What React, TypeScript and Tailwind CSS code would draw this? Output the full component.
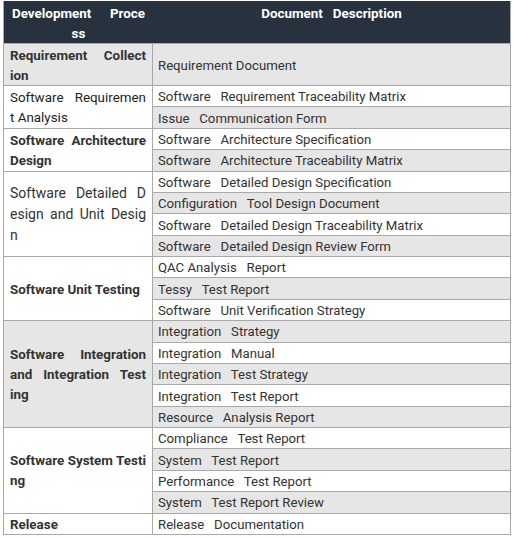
const groups = [
  {
    lines: ["Requirement Collect", "ion"],
    cls: "font-bold",
    bg: "bg-[#e6e6e6]",
    docs: ["Requirement Document"],
  },
  {
    lines: ["Software Requiremen", "t Analysis"],
    cls: "font-normal text-[#1e1e1e]",
    bg: "bg-white",
    docs: ["Software\u00a0\u00a0 Requirement Traceability Matrix", "Issue\u00a0\u00a0 Communication Form"],
  },
  {
    lines: ["Software Architecture", "Design"],
    cls: "font-bold",
    bg: "bg-white",
    docs: ["Software\u00a0\u00a0 Architecture Specification", "Software\u00a0\u00a0 Architecture Traceability Matrix"],
  },
  {
    lines: ["Software Detailed D", "esign and Unit Desig", "n"],
    cls: "font-normal text-[14px] leading-[21px]",
    bg: "bg-white",
    docs: [
      "Software\u00a0\u00a0 Detailed Design Specification",
      "Configuration\u00a0\u00a0 Tool Design Document",
      "Software\u00a0\u00a0 Detailed Design Traceability Matrix",
      "Software\u00a0\u00a0 Detailed Design Review Form",
    ],
  },
  {
    lines: ["Software Unit Testing"],
    cls: "font-bold",
    bg: "bg-white",
    docs: ["QAC Analysis\u00a0\u00a0 Report", "Tessy\u00a0\u00a0 Test Report", "Software\u00a0\u00a0 Unit Verification Strategy"],
  },
  {
    lines: ["Software Integration", "and Integration Test", "ing"],
    cls: "font-bold",
    bg: "bg-[#e6e6e6]",
    docs: [
      "Integration\u00a0\u00a0 Strategy",
      "Integration\u00a0\u00a0 Manual",
      "Integration\u00a0\u00a0 Test Strategy",
      "Integration\u00a0\u00a0 Test Report",
      "Resource\u00a0\u00a0 Analysis Report",
    ],
  },
  {
    lines: ["Software System Testi", "ng"],
    cls: "font-bold",
    bg: "bg-white",
    docs: ["Compliance\u00a0\u00a0 Test Report", "System\u00a0\u00a0 Test Report", "Performance\u00a0\u00a0 Test Report", "System\u00a0\u00a0 Test Report Review"],
  },
  {
    lines: ["Release"],
    cls: "font-bold",
    bg: "bg-white",
    docs: ["Release\u00a0\u00a0 Documentation"],
  },
];

function Justified({ lines }: { lines: string[] }) {
  return (
    <>
      {lines.map((l, i) => (
        <div
          key={i}
          className={
            i < lines.length - 1
              ? "whitespace-nowrap text-justify [text-align-last:justify]"
              : "whitespace-nowrap text-left"
          }
        >
          {l}
        </div>
      ))}
    </>
  );
}

export default function App() {
  let row = 0;
  const cells: React.ReactNode[] = [];
  groups.forEach((g, gi) => {
    const start = row + 1;
    cells.push(
      <div
        key={`l${gi}`}
        className={`${g.bg} col-start-1 flex flex-col justify-center px-[6px] pt-[2px] text-[13.4px] leading-[20px] text-[#333]`}
        style={{ gridRow: `${start} / span ${g.docs.length}` }}
      >
        <div className={g.cls}>
          <Justified lines={g.lines} />
        </div>
      </div>
    );
    g.docs.forEach((d, di) => {
      const idx = row + di;
      cells.push(
        <div
          key={`r${gi}-${di}`}
          className={`${idx % 2 === 0 ? "bg-[#e6e6e6]" : "bg-white"} col-start-2 flex items-center whitespace-nowrap pl-[5px] pt-[2px] text-[13.2px] text-[#333]`}
          style={{ gridRow: `${idx + 1}` }}
        >
          {d}
        </div>
      );
    });
    row += g.docs.length;
  });

  return (
    <div className="min-h-screen bg-white pt-px pl-[3px] font-['Roboto','Liberation_Sans',sans-serif]">
      <div className="w-[508px] bg-[#a9a9a9] p-px pt-0">
        <div className="flex h-[42px] bg-[#27323e] text-[13.4px] font-bold leading-[20px] text-white">
          <div className="w-[149px] px-[8px] pt-[3px]">
            <div className="whitespace-nowrap text-justify [text-align-last:justify]">Development&nbsp;&nbsp; Proce</div>
            <div className="text-center">ss</div>
          </div>
          <div className="flex-1 pt-[3px] text-center">Document&nbsp;&nbsp; Description</div>
        </div>
        <div className="mt-px grid grid-cols-[148px_357px] grid-rows-[41px_repeat(21,20.38px)] gap-px">
          {cells}
        </div>
      </div>
    </div>
  );
}
